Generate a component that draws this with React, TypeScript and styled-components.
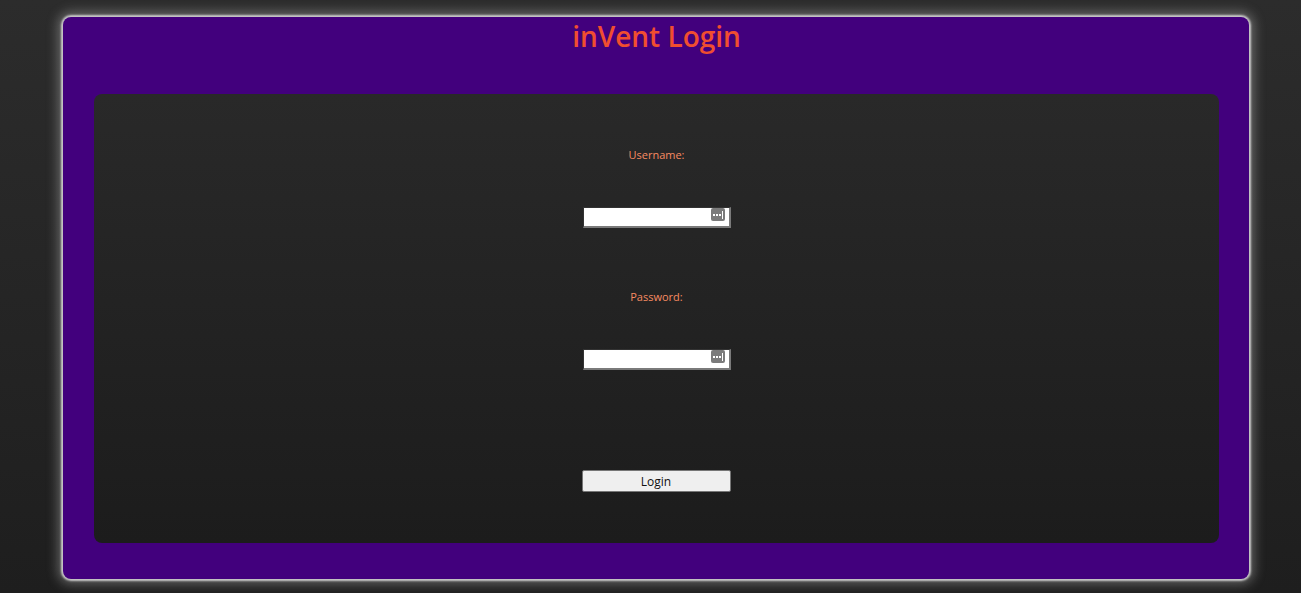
import React from 'react';
import styled, { createGlobalStyle } from 'styled-components';

const GlobalStyle = createGlobalStyle`
  html, body {
    margin: 0;
    padding: 0;
  }
  body {
    min-height: 100vh;
    background: linear-gradient(180deg, #2c2c2c 0%, #1e1e1e 100%);
    font-family: "Open Sans", "Noto Sans", sans-serif;
  }
`;

const Page = styled.div`
  padding: 17px 52px 14px 63px;
`;

const Card = styled.div`
  background: #42007d;
  border-radius: 8px;
  box-shadow: 0 0 2px 2px #c8c8c8, 0 0 12px 5px rgba(200, 200, 200, 0.4);
  padding: 0 30px 36px 31px;
  display: flex;
  flex-direction: column;
  align-items: stretch;
`;

const Title = styled.h1`
  margin: 0;
  height: 77px;
  font-size: 28px;
  font-weight: 600;
  color: #f04e30;
  text-align: center;
  line-height: 38px;
`;

const Panel = styled.div`
  background: linear-gradient(180deg, #292929 0%, #1c1c1c 100%);
  border-radius: 8px;
  height: 449px;
  display: flex;
  flex-direction: column;
  align-items: center;
  padding-top: 54px;
  box-sizing: border-box;
`;

const Label = styled.label<{ gap: number }>`
  font-size: 11px;
  color: #f78b62;
  line-height: 14px;
  margin-bottom: ${({ gap }) => gap}px;
`;

const Field = styled.div<{ after: number }>`
  position: relative;
  width: 148px;
  height: 21px;
  box-sizing: border-box;
  background: #fff;
  border-top: 1px solid #333;
  border-left: 1px solid #333;
  border-right: 2px solid #7a7a7a;
  border-bottom: 2px solid #7a7a7a;
  margin-bottom: ${({ after }) => after}px;
`;

const Input = styled.input`
  width: 100%;
  height: 100%;
  border: none;
  outline: none;
  padding: 0 20px 0 2px;
  box-sizing: border-box;
  background: transparent;
  font-size: 12px;
`;

const Reveal = styled.span`
  position: absolute;
  right: 4px;
  top: 0;
  width: 14px;
  height: 13px;
  display: flex;
`;

const Button = styled.button`
  width: 149px;
  height: 22px;
  background: #efefef;
  border: 1px solid #767676;
  border-radius: 2px;
  font-family: "Open Sans", "Noto Sans", sans-serif;
  font-size: 12px;
  color: #111;
  padding: 0;
  margin-left: -1px;
`;

const KeyIcon = () => (
  <svg width="14" height="13" viewBox="0 0 14 13">
    <rect x="0" y="0" width="14" height="13" rx="2" fill="#7b7b7b" />
    <rect x="2" y="6" width="2" height="2" fill="#fff" />
    <rect x="5" y="6" width="2" height="2" fill="#fff" />
    <rect x="8" y="6" width="2" height="2" fill="#fff" />
    <rect x="11" y="3" width="1" height="8" fill="#fff" />
  </svg>
);

const App: React.FC = () => (
  <>
    <GlobalStyle />
    <Page>
      <Card>
        <Title>inVent Login</Title>
        <Panel>
          <Label gap={45}>Username:</Label>
          <Field after={62}>
            <Input type="text" />
            <Reveal><KeyIcon /></Reveal>
          </Field>
          <Label gap={45}>Password:</Label>
          <Field after={100}>
            <Input type="password" />
            <Reveal><KeyIcon /></Reveal>
          </Field>
          <Button>Login</Button>
        </Panel>
      </Card>
    </Page>
  </>
);

export default App;
